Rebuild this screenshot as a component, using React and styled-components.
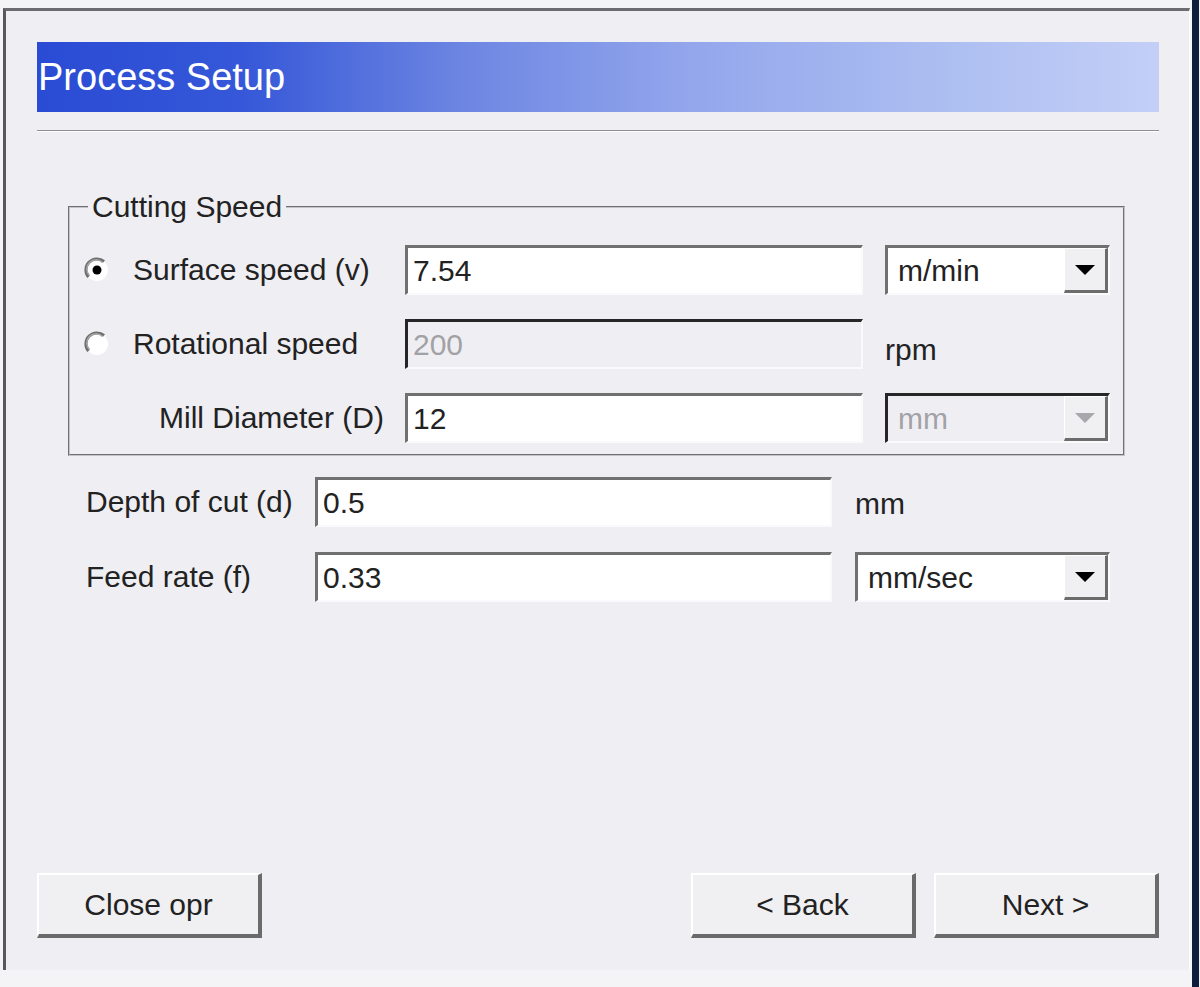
import React from "react";
import styled, { createGlobalStyle } from "styled-components";

const GlobalStyle = createGlobalStyle`
  html, body {
    margin: 0;
    padding: 0;
    background: #f4f4f7;
  }
  body {
    font-family: "Liberation Sans", Arial, sans-serif;
    color: #222;
  }
`;

const Page = styled.div`
  display: flex;
  width: 1200px;
  height: 987px;
  overflow: hidden;
`;

const Frame = styled.div`
  padding: 8px 0 0 3px;
`;

const Panel = styled.div`
  box-sizing: border-box;
  width: 1187px;
  height: 962px;
  display: flex;
  flex-direction: column;
  padding: 31px 30px 32px 31px;
  background: #eeeef3;
  border-top: 3px solid #6c6c70;
  border-left: 3px solid #58585c;
  border-right: 1px solid #fbfbfd;
`;

const NavyEdge = styled.div`
  width: 7px;
  margin-left: 2px;
  background: #0c1c3e;
`;

const Header = styled.div`
  height: 70px;
  display: flex;
  align-items: center;
  background: linear-gradient(
    90deg,
    #2a4bd4 0%,
    #3557d8 18%,
    #6d86e2 38%,
    #93a6ec 58%,
    #a9bbf0 78%,
    #c3cff7 100%
  );
`;

const Title = styled.h1`
  margin: 0;
  padding-left: 1px;
  font-size: 38px;
  font-weight: normal;
  color: #fff;
  line-height: 1;
`;

const Separator = styled.div`
  height: 1px;
  margin-top: 18px;
  background: #8f8f93;
  border-bottom: 1px solid #fff;
`;

const Group = styled.fieldset`
  margin: 58px 34px 0 31px;
  padding: 21px 14px 11px 13px;
  border: 2px groove #c4c4c8;
  min-width: 0;
`;

const Legend = styled.legend`
  margin-left: 5px;
  padding: 0 4px;
  font-size: 30px;
  line-height: 34px;
`;

const SpeedGrid = styled.div`
  display: grid;
  grid-template-columns: 50px 272px 458px 22px 225px;
  grid-auto-rows: 50px;
  row-gap: 24px;
  align-items: center;
`;

const FeedGrid = styled.div`
  display: grid;
  grid-template-columns: 229px 517px 23px 255px;
  grid-auto-rows: 50px;
  row-gap: 25px;
  align-items: center;
  margin: 21px 0 0 49px;
`;

const Label = styled.span`
  font-size: 30px;
  white-space: nowrap;
  grid-column: ${({ $span }) => ($span ? "1 / span 2" : "auto")};
  justify-self: ${({ $span }) => ($span ? "end" : "start")};
  padding-right: ${({ $span }) => ($span ? "21px" : "0")};
`;

const Unit = styled.span`
  grid-column: ${({ $col }) => $col};
  font-size: 30px;
  padding-top: ${({ $drop }) => $drop}px;
`;

const Field = styled.div`
  box-sizing: border-box;
  height: 50px;
  display: flex;
  align-items: center;
  padding-left: 5px;
  font-size: 30px;
  background: ${({ $disabled }) => ($disabled ? "#efeff3" : "#fff")};
  color: ${({ $disabled }) => ($disabled ? "#a2a2a6" : "#222")};
  border-top: 3px solid ${({ $disabled }) => ($disabled ? "#262626" : "#707070")};
  border-left: 3px solid ${({ $disabled }) => ($disabled ? "#262626" : "#707070")};
  border-right: 2px solid #fafafc;
  border-bottom: 2px solid #fafafc;
`;

const Combo = styled(Field)`
  grid-column: ${({ $col }) => $col};
  padding-left: 10px;
  padding-right: 0;
  justify-content: space-between;
`;

const DropButton = styled.div`
  box-sizing: border-box;
  width: 44px;
  height: 45px;
  display: flex;
  align-items: center;
  justify-content: center;
  background: #f0f0f2;
  border-top: 1px solid #fff;
  border-left: 1px solid #fff;
  border-right: 3px solid #6c6c6c;
  border-bottom: 3px solid #6c6c6c;
`;

const Arrow = styled.span`
  width: 0;
  height: 0;
  border-left: 10px solid transparent;
  border-right: 10px solid transparent;
  border-top: 10px solid ${({ $disabled }) => ($disabled ? "#a8a8ac" : "#000")};
`;

const RadioWrap = styled.span`
  display: flex;
  align-items: center;
`;

const ButtonBar = styled.div`
  margin-top: auto;
  display: flex;
  gap: 18px;
`;

const Spacer = styled.div`
  flex: 1;
`;

const Button = styled.button`
  box-sizing: border-box;
  width: 225px;
  height: 65px;
  padding: 0;
  font-family: "Liberation Sans", Arial, sans-serif;
  font-size: 30px;
  color: #222;
  background: #f0f0f2;
  border-top: 2px solid #fff;
  border-left: 2px solid #fff;
  border-right: 4px solid #6a6a6a;
  border-bottom: 4px solid #6a6a6a;
  border-radius: 0;
  cursor: pointer;
`;

const Radio = ({ checked }) => (
  <RadioWrap>
    <svg width="28" height="28" viewBox="0 0 28 28">
      <circle cx="14" cy="14" r="11" fill="#fff" />
      <path d="M5.5 21 A11 11 0 0 1 21 5.5" fill="none" stroke="#6e6e6e" strokeWidth="3" />
      <path d="M6.5 19.5 A9 9 0 0 1 19.5 6.5" fill="none" stroke="#a8a8a8" strokeWidth="1.5" />
      {checked && <circle cx="14" cy="14" r="4.5" fill="#000" />}
    </svg>
  </RadioWrap>
);

const ComboBox = ({ value, disabled, col }) => (
  <Combo $disabled={disabled} $col={col}>
    <span>{value}</span>
    <DropButton>
      <Arrow $disabled={disabled} />
    </DropButton>
  </Combo>
);

export default function App() {
  return (
    <Page>
      <GlobalStyle />
      <Frame>
        <Panel>
          <Header>
            <Title>Process Setup</Title>
          </Header>
          <Separator />

          <Group>
            <Legend>Cutting Speed</Legend>
            <SpeedGrid>
              <Radio checked />
              <Label>Surface speed (v)</Label>
              <Field>7.54</Field>
              <ComboBox value="m/min" col="5" />

              <Radio />
              <Label>Rotational speed</Label>
              <Field $disabled>200</Field>
              <Unit $col="5" $drop={12}>rpm</Unit>

              <Label $span>Mill Diameter (D)</Label>
              <Field>12</Field>
              <ComboBox value="mm" col="5" disabled />
            </SpeedGrid>
          </Group>

          <FeedGrid>
            <Label>Depth of cut (d)</Label>
            <Field>0.5</Field>
            <Unit $col="4" $drop={4}>mm</Unit>

            <Label>Feed rate (f)</Label>
            <Field>0.33</Field>
            <ComboBox value="mm/sec" col="4" />
          </FeedGrid>

          <ButtonBar>
            <Button>Close opr</Button>
            <Spacer />
            <Button>&lt; Back</Button>
            <Button>Next &gt;</Button>
          </ButtonBar>
        </Panel>
      </Frame>
      <NavyEdge />
    </Page>
  );
}
